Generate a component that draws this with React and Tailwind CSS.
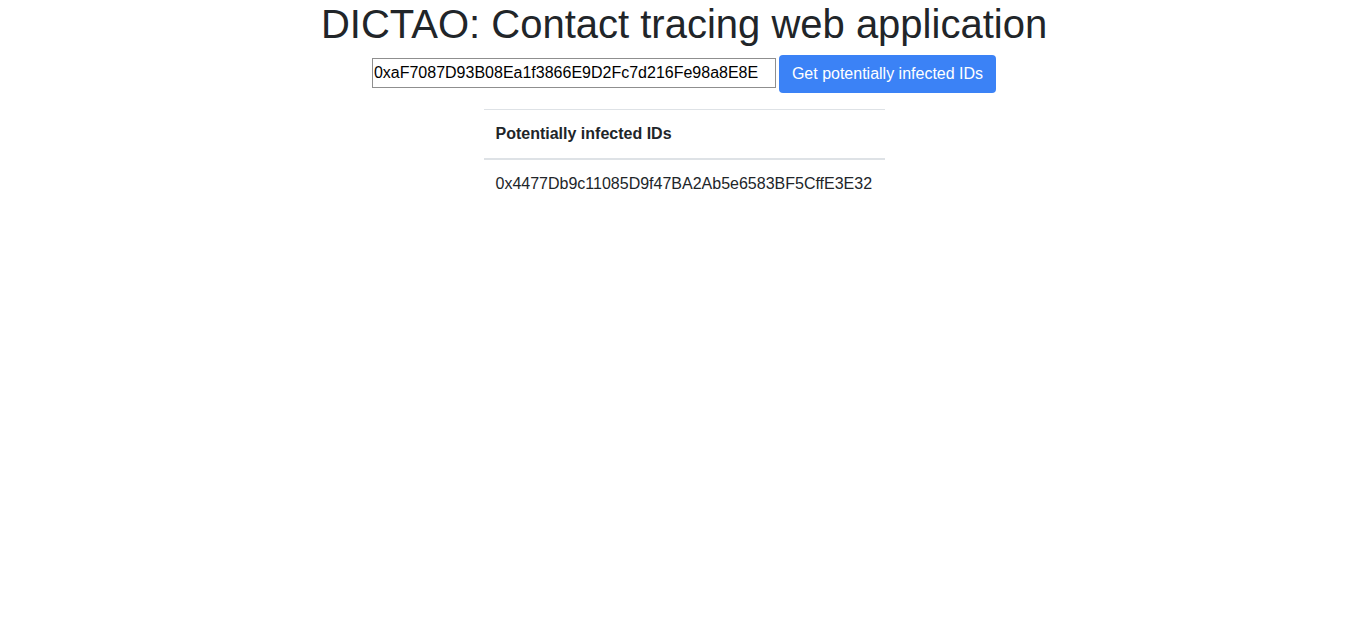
export default function App() {
  const account = '0xaF7087D93B08Ea1f3866E9D2Fc7d216Fe98a8E8E';
  const infected = ['0x4477Db9c11085D9f47BA2Ab5e6583BF5CffE3E32'];

  return (
    <div className="min-h-screen bg-white text-[#212529] font-['Liberation_Sans',Arial,sans-serif] text-center">
      <h1 className="text-[40px] leading-[1.2] font-normal mb-[7px]">DICTAO: Contact tracing web application</h1>
      <div className="flex justify-center items-start gap-[3px]">
        <input
          type="text"
          defaultValue={account}
          className="mt-[3px] w-[404px] h-[30px] border border-[#8f8f8f] px-px text-[16px] text-black font-['Liberation_Sans',Arial,sans-serif]"
        />
        <button
          type="button"
          className="h-[38px] px-3 border border-transparent rounded-[4px] bg-[#3b82f6] text-white text-[16px] leading-6"
        >
          Get potentially infected IDs
        </button>
      </div>
      <table className="w-[401px] mx-auto mt-4 border-collapse text-left text-[16px] leading-6">
        <thead>
          <tr>
            <th className="p-3 font-bold border-t border-b-2 border-[#dee2e6]">Potentially infected IDs</th>
          </tr>
        </thead>
        <tbody>
          {infected.map((id) => (
            <tr key={id}>
              <td className="p-3">{id}</td>
            </tr>
          ))}
        </tbody>
      </table>
    </div>
  );
}
